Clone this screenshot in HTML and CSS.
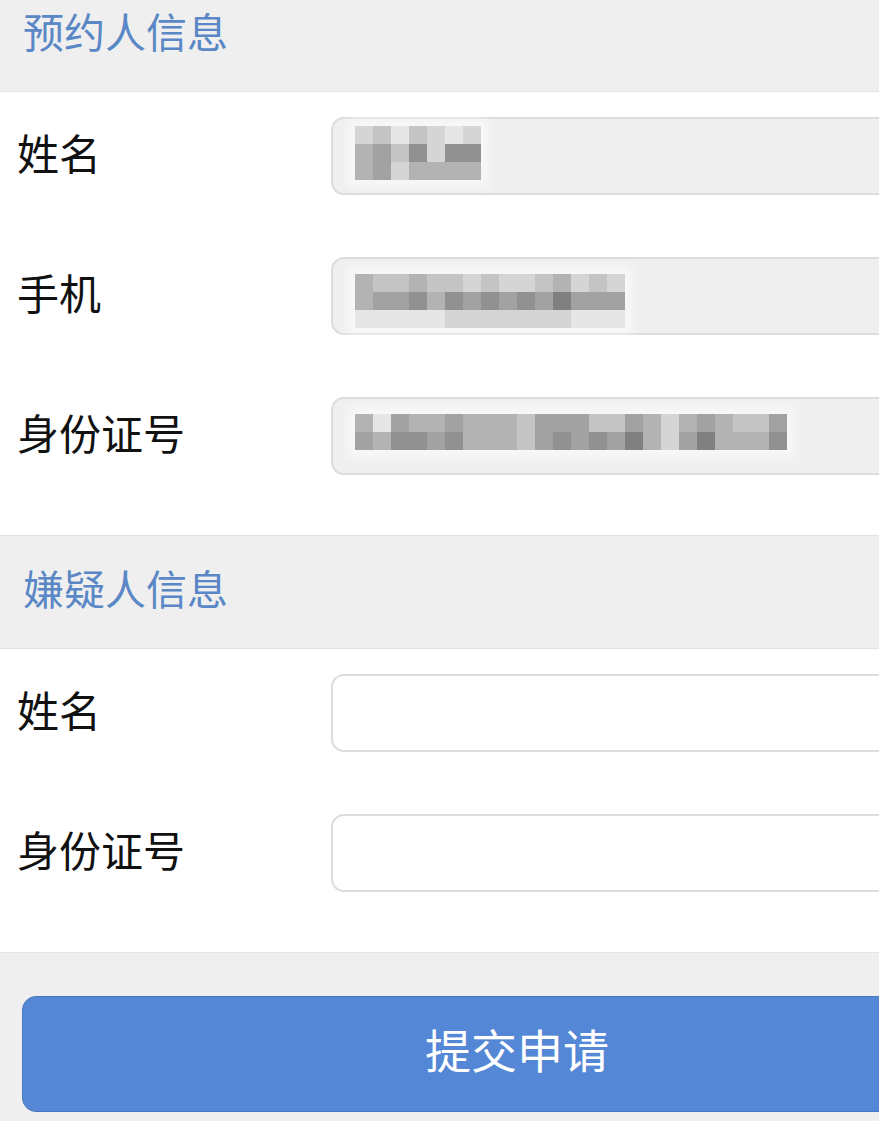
FILE: index.html
```html
<!DOCTYPE html>
<html lang="zh-CN">
  <head>
    <meta charset="UTF-8" />
    <meta name="viewport" content="width=device-width, initial-scale=1.0" />
    <title>预约申请</title>
    <link rel="stylesheet" href="styles.css">
  </head>
  <body>
    <div class="page">
      <!-- 预约人 -->
      <div class="section-title">预约人信息</div>
      <div class="group">
        <div class="row">
          <label class="label">姓名</label>
          <div class="field readonly first">
            <div class="mosaic" data-rows="1202101 3425155 3413333"></div>
          </div>
        </div>
        <div class="row">
          <label class="label">手机</label>
          <div class="field readonly">
            <div class="mosaic" data-rows="322322121123121 344535454546444 000001111111000"></div>
          </div>
        </div>
        <div class="row">
          <label class="label">身份证号</label>
          <div class="field readonly">
            <div class="mosaic" data-rows="304334333244422431343224 435545333245454631463335"></div>
          </div>
        </div>
      </div>

      <!-- 嫌疑人 -->
      <div class="section-title">嫌疑人信息</div>
      <div class="group">
        <div class="row">
          <label class="label" for="suspectName">姓名</label>
          <input class="field" type="text" id="suspectName" />
        </div>
        <div class="row">
          <label class="label" for="suspectId">身份证号</label>
          <input class="field" type="text" id="suspectId" />
        </div>
      </div>

      <div class="actions">
        <button class="submit">提交申请</button>
      </div>
    </div>

    <script>
      // build the pixelated blocks from the digit strings
      document.querySelectorAll(".mosaic").forEach(function (box) {
        box.dataset.rows.split(" ").forEach(function (line) {
          let row = document.createElement("div");
          row.className = "mosaic-row";
          line.split("").forEach(function (d) {
            let cell = document.createElement("span");
            let level = 230 - Number(d) * 17;
            cell.style.background = "rgb(" + level + "," + level + "," + level + ")";
            row.appendChild(cell);
          });
          box.appendChild(row);
        });
      });
    </script>
  </body>
</html>
```

FILE: styles.css
```css
/* Base */
body {
  margin: 0;
  background: #fff;
  color: #111;
  font-family: "Noto Sans CJK SC", "Noto Sans", sans-serif;
  overflow-x: hidden;
}

/* page is scrolled a little */
.page {
  margin-top: -22px;
}

/* Section headers */
.section-title {
  height: 102px;
  line-height: 102px;
  padding: 0 0 10px 23px;
  background: #efefef;
  border-top: 1px solid #e2e2e2;
  border-bottom: 1px solid #e2e2e2;
  color: #5a87c5;
  font-size: 41px;
}

/* Form rows */
.group {
  display: flex;
  flex-direction: column;
  gap: 62px;
  padding: 25px 0 60px;
  background: #fff;
}

.row {
  display: flex;
  align-items: center;
}

.label {
  flex: none;
  width: 314px;
  padding: 0 0 9px 17px;
  font-size: 42px;
  color: #111;
}

.field {
  flex: none;
  box-sizing: border-box;
  width: 620px;
  height: 78px;
  margin: 0;
  border: 2px solid #dcdcdc;
  border-radius: 13px;
  background: #fff;
  font: inherit;
  outline: none;
}

.readonly {
  background: #efefef;
  padding: 14px 0 0 22px;
}

.readonly.first {
  padding-top: 6px;
}

/* blurred personal data */
.mosaic {
  display: inline-flex;
  flex-direction: column;
  box-shadow: 0 0 10px 8px rgba(255, 255, 255, 0.55);
}

.mosaic-row {
  display: flex;
}

.mosaic-row span {
  width: 18px;
  height: 18px;
}

/* Submit */
.actions {
  background: #efefef;
  border-top: 1px solid #e4e4e4;
  padding: 43px 0 40px 22px;
}

.submit {
  display: block;
  width: 990px;
  height: 116px;
  padding: 0 0 12px;
  border: 1px solid #4a78be;
  border-radius: 14px;
  background: #5487d5;
  color: #fff;
  font-family: inherit;
  font-size: 46px;
  cursor: pointer;
}
```
